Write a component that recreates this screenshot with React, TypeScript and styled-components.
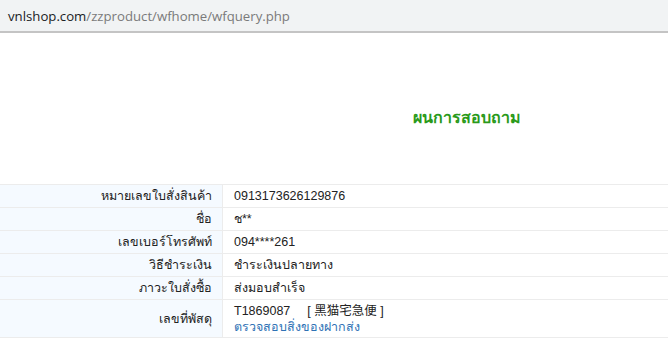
import styled, { createGlobalStyle } from 'styled-components';

const GlobalStyle = createGlobalStyle`
  html, body {
    margin: 0;
    padding: 0;
    background: #ffffff;
  }
  body {
    font-family: Tahoma, "Liberation Sans", "Noto Sans", "Noto Sans CJK SC", sans-serif;
  }
`;

const AddressBar = styled.div`
  height: 31px;
  background: #f1f3f4;
  border-bottom: 2px solid #c4c4c4;
  display: flex;
  align-items: center;
  padding-left: 8px;
  font-family: "Open Sans", "Liberation Sans", sans-serif;
  font-size: 13.2px;
  color: #7a7a7a;
  white-space: nowrap;

  .host {
    color: #202124;
  }
`;

const Heading = styled.div`
  height: 151px;
  display: flex;
  align-items: center;
  padding-left: 413px;
  padding-top: 18px;
  box-sizing: border-box;
  color: #2a9a1a;
  font-weight: bold;
  font-size: 16px;
`;

const Table = styled.div`
  display: grid;
  grid-template-columns: 223px 1fr;
  border-top: 1px solid #ececec;
  font-size: 12.5px;
  color: #222;
`;

const Label = styled.div<{ $tall?: boolean }>`
  background: #f5faff;
  border-bottom: 1px solid #ececec;
  border-right: 1px solid #ececec;
  height: ${(p) => (p.$tall ? 37 : 22)}px;
  display: flex;
  align-items: center;
  justify-content: flex-end;
  padding-right: 10px;
`;

const Value = styled.div<{ $tall?: boolean }>`
  border-bottom: 1px solid #ececec;
  height: ${(p) => (p.$tall ? 37 : 22)}px;
  display: flex;
  flex-direction: column;
  justify-content: center;
  padding-left: 11px;
  line-height: 16px;
`;

const Carrier = styled.span`
  margin-left: 17px;
`;

const TrackLink = styled.a`
  color: #2f72b5;
  text-decoration: none;
`;

const rows: [string, string][] = [
  ['หมายเลขใบสั่งสินค้า', '0913173626129876'],
  ['ชื่อ', 'ช**'],
  ['เลขเบอร์โทรศัพท์', '094****261'],
  ['วิธีชำระเงิน', 'ชำระเงินปลายทาง'],
  ['ภาวะใบสั่งซื้อ', 'ส่งมอบสำเร็จ'],
];

export default function App() {
  return (
    <>
      <GlobalStyle />
      <AddressBar>
        <span className="host">vnlshop.com</span>/zzproduct/wfhome/wfquery.php
      </AddressBar>
      <Heading>ผนการสอบถาม</Heading>
      <Table>
        {rows.map(([k, v]) => (
          <>
            <Label key={k + '-l'}>{k}</Label>
            <Value key={k + '-v'}>{v}</Value>
          </>
        ))}
        <Label $tall>เลขที่พัสดุ</Label>
        <Value $tall>
          <div>
            T1869087<Carrier>[ 黑猫宅急便 ]</Carrier>
          </div>
          <TrackLink href="#">ตรวจสอบสิ่งของฝากส่ง</TrackLink>
        </Value>
      </Table>
    </>
  );
}
